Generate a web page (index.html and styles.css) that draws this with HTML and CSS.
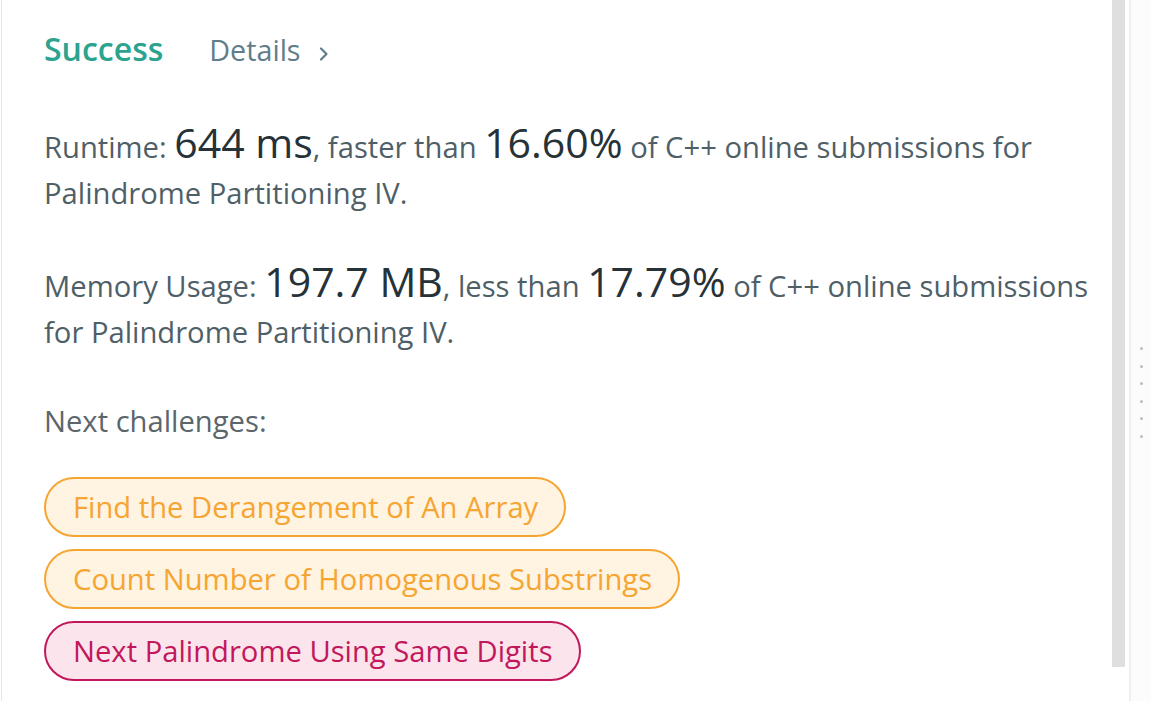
FILE: index.html
```html
<!DOCTYPE html>
<html lang="en">
<head>
<meta charset="utf-8">
<title>Submission result</title>
<link rel="stylesheet" href="styles.css">
</head>
<body>
<div class="layout">
  <main class="content">
    <div class="head">
      <span class="status">Success</span>
      <a class="details">Details
        <svg class="chev" width="10" height="14" viewBox="0 0 10 14"><path d="M2 1.5 L7.5 7 L2 12.5" fill="none" stroke="#5f7d8b" stroke-width="2.2" stroke-linecap="round" stroke-linejoin="round"/></svg>
      </a>
    </div>
    <p class="stat">Runtime: <span class="big">644 ms</span>, faster than <span class="big">16.60%</span> of C++ online submissions for Palindrome Partitioning IV.</p>
    <p class="stat">Memory Usage: <span class="big">197.7 MB</span>, less than <span class="big">17.79%</span> of C++ online submissions for Palindrome Partitioning IV.</p>
    <p class="next">Next challenges:</p>
    <div class="pills">
      <a class="pill medium">Find the Derangement of An Array</a>
      <a class="pill medium">Count Number of Homogenous Substrings</a>
      <a class="pill hard">Next Palindrome Using Same Digits</a>
    </div>
  </main>
  <div class="scrollcol"><div class="thumb"></div></div>
  <div class="divider"></div>
  <aside class="side">
    <div class="dots"><i></i><i></i><i></i><i></i><i></i><i></i></div>
  </aside>
</div>
</body>
</html>
```
FILE: styles.css
```css
* { box-sizing: border-box; }
html, body { margin: 0; padding: 0; background: #fff; }
body { font-family: "Open Sans", "Noto Sans", sans-serif; }

.layout {
  display: flex;
  height: 701px;
  width: 1151px;
  overflow: hidden;
}

.content {
  flex: 1;
  margin-left: 1px;
  border-left: 1px solid #e4e4e4;
  padding: 26px 4px 0 42px;
  font-size: 29.2px;
  color: #4f5f67;
}

.head {
  display: flex;
  align-items: baseline;
  height: 46px;
  line-height: 46px;
}
.status {
  font-size: 32px;
  font-weight: 600;
  color: #2ba38e;
}
.details {
  margin-left: 46px;
  font-size: 28.7px;
  color: #607d8b;
  display: inline-flex;
  align-items: baseline;
}
.chev { margin-left: 18px; }

.stat {
  margin: 0;
  line-height: 46px;
}
.stat:first-of-type { margin-top: 50px; }
.stat + .stat { margin-top: 45px; }
.big {
  font-size: 41px;
  line-height: 1;
  color: #263238;
}

.next {
  margin: 43px 0 0;
  line-height: 46px;
  color: #5b666b;
}

.pills {
  margin-top: 33px;
  display: flex;
  flex-direction: column;
  align-items: flex-start;
  gap: 12px;
}
.pill {
  height: 60px;
  line-height: 56px;
  padding: 0 26px 0 27px;
  border: 2px solid;
  border-radius: 30px;
  white-space: nowrap;
  font-size: 29.2px;
}
.pill.medium {
  color: #f5a532;
  border-color: #f5a532;
  background: #fff3e1;
}
.pill.hard {
  color: #c2185b;
  border-color: #c2185b;
  background: #fce4ec;
}

.scrollcol {
  width: 20px;
  padding-left: 3px;
}
.thumb {
  width: 13px;
  height: 667px;
  background: #dfdfdf;
}
.divider {
  width: 2px;
  background: #efefef;
}
.side {
  width: 20px;
  background: #fcfcfc;
  display: flex;
  justify-content: center;
  padding-top: 347px;
}
.dots {
  display: flex;
  flex-direction: column;
  gap: 14.5px;
}
.dots i {
  display: block;
  width: 3px;
  height: 3px;
  border-radius: 50%;
  background: #bdbdbd;
}
```
